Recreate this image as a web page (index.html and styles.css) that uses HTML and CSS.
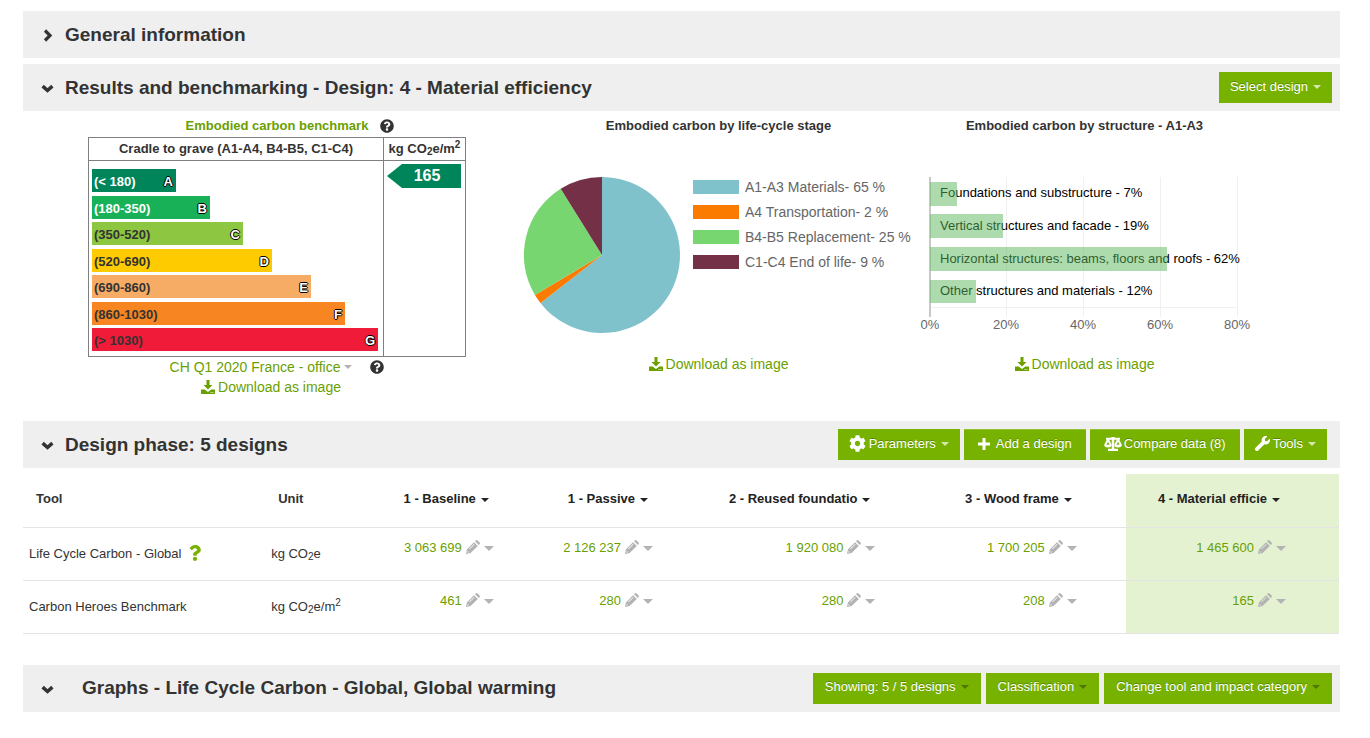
FILE: index.html
```html
<!DOCTYPE html>
<html lang="en">
<head>
<meta charset="utf-8">
<meta name="viewport" content="width=device-width, initial-scale=1">
<title>Material efficiency</title>
<link rel="stylesheet" href="styles.css">
</head>
<body>
<svg class="sprite" aria-hidden="true">
  <symbol id="help" viewBox="0 0 512 512"><path d="M504 256c0 136.997-111.043 248-248 248S8 392.997 8 256C8 119.083 119.043 8 256 8s248 111.083 248 248zM262.655 90c-54.497 0-89.255 22.957-116.549 63.758-3.536 5.286-2.353 12.415 2.715 16.258l34.699 26.31c5.205 3.947 12.621 3.008 16.665-2.122 17.864-22.658 30.113-35.797 57.303-35.797 20.429 0 45.698 13.148 45.698 32.958 0 14.976-12.363 22.667-32.534 33.976C247.128 238.528 216 254.941 216 296v4c0 6.627 5.373 12 12 12h56c6.627 0 12-5.373 12-12v-1.333c0-28.462 83.186-29.647 83.186-106.667 0-58.002-60.165-102-116.531-102zM256 338c-25.365 0-46 20.635-46 46 0 25.364 20.635 46 46 46s46-20.636 46-46c0-25.365-20.635-46-46-46z"/></symbol>
  <symbol id="question" viewBox="0 0 384 512"><path d="M202.021 0C122.202 0 70.503 32.703 29.914 91.026c-7.363 10.58-5.093 25.086 5.178 32.874l43.138 32.709c10.373 7.865 25.132 6.026 33.253-4.148 25.049-31.381 43.63-49.449 82.757-49.449 30.764 0 68.816 19.799 68.816 49.631 0 22.552-18.617 34.134-48.993 51.164-35.423 19.86-82.299 44.576-82.299 106.405V320c0 13.255 10.745 24 24 24h72.471c13.255 0 24-10.745 24-24v-5.773c0-42.86 125.268-44.645 125.268-160.627C377.504 66.256 286.902 0 202.021 0zM192 373.459c-38.196 0-69.271 31.075-69.271 69.271 0 38.195 31.075 69.27 69.271 69.27s69.271-31.075 69.271-69.271-31.075-69.27-69.271-69.27z"/></symbol>
  <symbol id="wrench" viewBox="0 0 512 512"><path d="M507.73 109.1c-2.24-9.03-13.54-12.09-20.12-5.51l-74.36 74.36-67.88-11.31-11.31-67.88 74.36-74.36c6.62-6.62 3.43-17.9-5.66-20.16-47.38-11.74-99.55.91-136.58 37.93-39.64 39.64-50.55 97.1-34.05 147.2L18.74 402.76c-24.99 24.99-24.99 65.51 0 90.5 24.99 24.99 65.51 24.99 90.5 0l213.21-213.21c50.12 16.71 107.47 5.68 147.37-34.22 37.07-37.07 49.7-89.32 37.91-136.73z"/></symbol>
  <symbol id="cog" viewBox="0 0 512 512"><path d="M487.4 315.7l-42.6-24.6c4.3-23.2 4.3-47 0-70.2l42.6-24.6c4.9-2.8 7.1-8.6 5.5-14-11.1-35.6-30-67.8-54.7-94.6-3.8-4.1-10-5.1-14.8-2.3L380.8 110c-17.9-15.4-38.5-27.3-60.8-35.1V25.8c0-5.6-3.9-10.5-9.4-11.7-36.7-8.2-74.3-7.8-109.2 0-5.5 1.2-9.4 6.1-9.4 11.7V75c-22.2 7.9-42.8 19.8-60.8 35.1L88.7 85.5c-4.9-2.8-11-1.9-14.8 2.3-24.7 26.7-43.6 58.9-54.7 94.6-1.7 5.4.6 11.2 5.5 14L67.3 221c-4.3 23.2-4.3 47 0 70.2l-42.6 24.6c-4.9 2.8-7.1 8.6-5.5 14 11.1 35.6 30 67.8 54.7 94.6 3.8 4.1 10 5.1 14.8 2.3l42.6-24.6c17.9 15.4 38.5 27.3 60.8 35.1v49.2c0 5.6 3.9 10.5 9.4 11.7 36.7 8.2 74.3 7.8 109.2 0 5.5-1.2 9.4-6.1 9.4-11.7v-49.2c22.2-7.9 42.8-19.8 60.8-35.1l42.6 24.6c4.9 2.8 11 1.9 14.8-2.3 24.7-26.7 43.6-58.9 54.7-94.6 1.5-5.5-.7-11.3-5.6-14.1zM256 336c-44.1 0-80-35.9-80-80s35.9-80 80-80 80 35.9 80 80-35.900 80-80 80z"/></symbol>
  <symbol id="download" viewBox="0 0 14 14"><path d="M5.500 0h3v5h3L7 9.500 2.500 5h3zM.5 9.500h3.200L7 12l3.300-2.500h3.200q.5 0 .5.500v3.500q0 .5-.5.500H.5q-.5 0-.5-.5V10q0-.5.5-.5zM9.600 12v.9h.9V12zm1.900 0v.9h.9V12z"/></symbol>
  <symbol id="plus" viewBox="0 0 12 12"><path d="M4.500 0h3v4.500H12v3H7.500V12h-3V7.500H0v-3h4.500z"/></symbol>
  <symbol id="scale" viewBox="0 0 18 14"><path d="M2 .8h5.200a1.900 1.900 0 0 1 3.600 0H16v2h-5.700v8.900H14V14H4v-2.300h3.700V2.800H2z"/><path fill-rule="evenodd" d="M3.100 2h1.800l2.700 5.800q0 2.700-3.700 2.700T.2 7.800zM4 4.700 2.500 7.800h3zM13.100 2h1.800l2.900 5.800q0 2.700-3.800 2.700t-3.700-2.700zM14 4.700l-1.500 3.100h3z"/></symbol>
  <symbol id="pencil" viewBox="0 0 14 14"><path fill-rule="evenodd" d="M8 2.200 11.800 6l-7.200 7.100L0 14l.9-4.600zM8 4 3.200 8.800l.5.500 4.800-4.800zM1.800 11l-.4 1.600L3 12.200z"/><path d="M9 1.200l1-.9q.8-.6 1.500.1l2.100 2.100q.7.700.1 1.500l-.9 1z"/></symbol>
  <symbol id="down" viewBox="0 0 12 8"><path d="M1.500 1.800 6 5.800l4.500-4" fill="none" stroke="currentColor" stroke-width="3.200"/></symbol>
  <symbol id="right" viewBox="0 0 9 13"><path d="M2 1.500 7 6.500l-5 5" fill="none" stroke="currentColor" stroke-width="3.200"/></symbol>
</svg>
<main class="page">
  <section class="bar">
    <h2 class="bar-title"><svg class="chev chev-right"><use href="#right"/></svg>General information</h2>
  </section>

  <section>
    <div class="bar">
      <h2 class="bar-title"><svg class="chev"><use href="#down"/></svg>Results and benchmarking - Design: 4 - Material efficiency</h2>
      <div class="actions"><button class="btn" type="button">Select design<i class="caret"></i></button></div>
    </div>
    <div class="results">
      <div class="panel panel-benchmark">
        <h3 class="panel-title green">Embodied carbon benchmark<svg class="help"><use href="#help"/></svg></h3>
        <table class="rating">
          <thead><tr><th>Cradle to grave (A1-A4, B4-B5, C1-C4)</th><th class="rating-unit">kg CO<sub>2</sub>e/m<sup>2</sup></th></tr></thead>
          <tbody><tr>
            <td><div class="grades">
              <div class="grade grade-a"><span>(&lt; 180)</span><b>A</b></div>
              <div class="grade grade-b"><span>(180-350)</span><b>B</b></div>
              <div class="grade grade-c"><span>(350-520)</span><b>C</b></div>
              <div class="grade grade-d"><span>(520-690)</span><b>D</b></div>
              <div class="grade grade-e"><span>(690-860)</span><b>E</b></div>
              <div class="grade grade-f"><span>(860-1030)</span><b>F</b></div>
              <div class="grade grade-g"><span>(&gt; 1030)</span><b>G</b></div>
            </div></td>
            <td class="score-cell"><div class="score">165</div></td>
          </tr></tbody>
        </table>
        <div class="line line-source"><a href="#">CH Q1 2020 France - office<i class="caret grey"></i></a><svg class="help"><use href="#help"/></svg></div>
        <div class="line line-benchmark"><a href="#"><svg class="dl"><use href="#download"/></svg>Download as image</a></div>
      </div>

      <div class="panel">
        <h3 class="panel-title">Embodied carbon by life-cycle stage</h3>
        <div class="pie-row">
          <svg class="pie" viewBox="0 0 156 156" role="img" aria-label="Embodied carbon by life-cycle stage">
            <path fill="#7fc2cc" d="M78 78V0A78 78 0 1 1 16.500 126z"/>
            <path fill="#fb7a00" d="M78 78 16.500 126A78 78 0 0 1 10.900 118z"/>
            <path fill="#78d670" d="M78 78 10.900 118A78 78 0 0 1 36.700 11.800z"/>
            <path fill="#733046" d="M78 78 36.700 11.800A78 78 0 0 1 78 0z"/>
          </svg>
          <ul class="legend">
            <li><i class="swatch blue"></i>A1-A3 Materials- 65 %</li>
            <li><i class="swatch orange"></i>A4 Transportation- 2 %</li>
            <li><i class="swatch lime"></i>B4-B5 Replacement- 25 %</li>
            <li><i class="swatch wine"></i>C1-C4 End of life- 9 %</li>
          </ul>
        </div>
        <div class="line"><a href="#"><svg class="dl"><use href="#download"/></svg>Download as image</a></div>
      </div>

      <div class="panel">
        <h3 class="panel-title">Embodied carbon by structure - A1-A3</h3>
        <svg class="bars" viewBox="0 0 330 156" role="img" aria-label="Embodied carbon by structure">
          <g fill="#f0f0f0">
            <path d="M86 0h1v140h-1zM163 0h1v140h-1zM240 0h1v140h-1zM317 0h1v140h-1zM10 130h307v1H10z"/>
          </g>
          <path fill="#c8c8c8" d="M9 0h2v140H9z"/>
          <g fill="#000">
            <text x="20" y="20">Foundations and substructure - 7%</text>
            <text x="20" y="53">Vertical structures and facade - 19%</text>
            <text x="20" y="86">Horizontal structures: beams, floors and roofs - 62%</text>
            <text x="20" y="118">Other structures and materials - 12%</text>
          </g>
          <g fill="#5cb85c" fill-opacity="0.500">
            <path d="M10 5h27v24H10zM10 37h73v24H10zM10 70h237v24H10zM10 103h46v23H10z"/>
          </g>
          <g fill="#666" text-anchor="middle">
            <text x="10" y="152">0%</text><text x="86" y="152">20%</text><text x="163" y="152">40%</text><text x="240" y="152">60%</text><text x="317" y="152">80%</text>
          </g>
        </svg>
        <div class="line"><a href="#"><svg class="dl"><use href="#download"/></svg>Download as image</a></div>
      </div>
    </div>
  </section>

  <section class="phase">
    <div class="bar">
      <h2 class="bar-title"><svg class="chev"><use href="#down"/></svg>Design phase: 5 designs</h2>
      <div class="actions actions-phase">
        <button class="btn" type="button"><svg class="ico"><use href="#cog"/></svg>Parameters<i class="caret"></i></button>
        <button class="btn btn-plain" type="button"><svg class="ico-plus"><use href="#plus"/></svg>Add a design</button>
        <button class="btn btn-plain" type="button"><svg class="ico-scale"><use href="#scale"/></svg>Compare data (8)</button>
        <button class="btn" type="button"><svg class="ico-wrench"><use href="#wrench"/></svg>Tools<i class="caret"></i></button>
      </div>
    </div>
    <table class="designs">
      <colgroup><col class="c-tool"><col class="c-unit"><col class="c-one"><col class="c-two"><col class="c-three"><col class="c-four"><col class="c-five"></colgroup>
      <thead><tr>
        <th class="name">Tool</th><th class="name">Unit</th>
        <th>1 - Baseline<i class="caret dark"></i></th><th>1 - Passive<i class="caret dark"></i></th><th>2 - Reused foundatio<i class="caret dark"></i></th><th>3 - Wood frame<i class="caret dark"></i></th><th class="current">4 - Material efficie<i class="caret dark"></i></th>
      </tr></thead>
      <tbody>
      <tr>
        <td class="name">Life Cycle Carbon - Global<svg class="question"><use href="#question"/></svg></td><td class="name">kg CO<sub>2</sub>e</td>
        <td><a href="#">3 063 699</a><svg class="pencil"><use href="#pencil"/></svg><i class="caret grey"></i></td>
        <td><a href="#">2 126 237</a><svg class="pencil"><use href="#pencil"/></svg><i class="caret grey"></i></td>
        <td><a href="#">1 920 080</a><svg class="pencil"><use href="#pencil"/></svg><i class="caret grey"></i></td>
        <td><a href="#">1 700 205</a><svg class="pencil"><use href="#pencil"/></svg><i class="caret grey"></i></td>
        <td class="current"><a href="#">1 465 600</a><svg class="pencil"><use href="#pencil"/></svg><i class="caret grey"></i></td>
      </tr>
      <tr>
        <td class="name">Carbon Heroes Benchmark</td><td class="name">kg CO<sub>2</sub>e/m<sup>2</sup></td>
        <td><a href="#">461</a><svg class="pencil"><use href="#pencil"/></svg><i class="caret grey"></i></td>
        <td><a href="#">280</a><svg class="pencil"><use href="#pencil"/></svg><i class="caret grey"></i></td>
        <td><a href="#">280</a><svg class="pencil"><use href="#pencil"/></svg><i class="caret grey"></i></td>
        <td><a href="#">208</a><svg class="pencil"><use href="#pencil"/></svg><i class="caret grey"></i></td>
        <td class="current"><a href="#">165</a><svg class="pencil"><use href="#pencil"/></svg><i class="caret grey"></i></td>
      </tr>
      </tbody>
    </table>
  </section>

  <section class="bar graphs">
    <h2 class="bar-title title-wide"><svg class="chev"><use href="#down"/></svg>Graphs - Life Cycle Carbon - Global, Global warming</h2>
    <div class="actions actions-graphs">
      <button class="btn" type="button">Showing: 5 / 5 designs<i class="caret shade"></i></button>
      <button class="btn" type="button">Classification<i class="caret shade"></i></button>
      <button class="btn" type="button">Change tool and impact category<i class="caret shade"></i></button>
    </div>
  </section>
</main>
</body>
</html>
```
FILE: styles.css
```css
* { box-sizing: border-box; }
body { margin: 0; background: #fff; color: #333; font: 14px/20px "Liberation Sans", Arial, sans-serif; }
h2, h3, ul { margin: 0; padding: 0; }
a { color: #6a9f00; text-decoration: none; }
svg { fill: currentColor; flex: none; }
sub, sup { font-size: 10px; line-height: 0; }
sub { vertical-align: -2px; }
.sprite { position: absolute; width: 0; height: 0; }
.page { padding: 11px 30px 24px 23px; }

.bar { display: flex; align-items: center; justify-content: space-between; min-height: 47px; padding: 8px 8px 8px 18px; margin-bottom: 6px; background: #efefef; }
.bar-title { display: flex; align-items: center; gap: 11px; font-size: 19px; line-height: 24px; }
.title-wide { gap: 28px; }
.chev { width: 13px; height: 9px; margin-top: 2px; }
.chev-right { height: 13px; }
.actions { display: flex; gap: 5px; }
.actions-phase { margin-right: 5px; gap: 4px; }
.btn { display: flex; align-items: center; height: 31px; padding: 0 11px 2px; border: 0; background: #77b200; color: #fff; font: 13px/20px "Liberation Sans", Arial, sans-serif; text-shadow: 0 -1px 0 rgba(0, 0, 0, 0.25); white-space: nowrap; }
.caret { display: inline-block; width: 0; height: 0; margin-left: 5px; border: 4px solid transparent; border-top-color: #d5e8ae; border-bottom: 0; vertical-align: middle; }
.caret.grey { border-width: 5px; border-bottom: 0; border-top-color: #b3b3b3; margin-left: 4px; }
.caret.dark { border-top-color: #222; }
.caret.shade { border-top-color: #507800; }
.ico { width: 17px; height: 17px; margin-right: 3px; }
.ico-plus { width: 12px; height: 12px; margin-right: 6px; }
.ico-scale { width: 18px; height: 14px; margin-right: 2px; }
.ico-wrench { width: 15px; height: 15px; margin-right: 3px; }
.btn-plain { padding: 0 14px 2px; box-shadow: inset 0 1px 0 rgba(255, 255, 255, 0.2); }
.actions-graphs .btn { padding: 0 12px 2px; }

.results { display: grid; grid-template-columns: 501fr 389fr 343fr 84fr; min-height: 305px; margin-top: -1px; }
.panel { display: flex; flex-direction: column; align-items: center; }
.panel-benchmark { padding-left: 7px; }
.panel-title { display: flex; align-items: center; gap: 12px; font-size: 13px; line-height: 20px; }
.green { color: #6a9f00; }
.help { width: 14px; height: 14px; color: #333; }
.green .help { margin-right: -26px; }
.line { display: flex; align-items: center; line-height: 20px; }
.line a { display: flex; align-items: center; }
.line .grey { border-width: 4px; border-bottom: 0; }
.line-source { gap: 18px; }
.line-benchmark { padding-right: 12px; }
.dl { width: 14px; height: 14px; margin-right: 3px; }

.rating { width: 378px; margin-top: 1px; border-collapse: collapse; font-weight: bold; font-size: 13px; color: #333; }
.rating th, .rating td { border: 1px solid #808080; padding: 0; }
.rating th { height: 23px; line-height: 20px; white-space: nowrap; }
.rating-unit { width: 82px; }
.grades { display: flex; flex-direction: column; justify-content: space-between; height: 182px; margin: 8px 4px 5px 3px; }
.grade { display: flex; justify-content: space-between; height: 23px; padding: 3px 3px 0 2px; }
.grade b { color: #fff; text-shadow: 1px 0 #000, -1px 0 #000, 0 1px #000, 0 -1px #000; }
.grade-a { width: 84px; background: #00845a; color: #fff; }
.grade-b { width: 118px; background: #19b158; color: #fff; }
.grade-c { width: 151px; background: #8dc640; }
.grade-d { width: 180px; background: #fecb00; }
.grade-e { width: 219px; background: #f6ac64; }
.grade-f { width: 253px; background: #f78522; }
.grade-g { width: 286px; background: #f01b38; }
.rating .score-cell { vertical-align: top; padding: 3px 4px 3px 3px; }
.score { height: 24px; padding-left: 6px; background: #00845a; color: #fff; clip-path: polygon(0 50%, 15px 0, 100% 0, 100% 100%, 15px 100%); font-size: 16px; line-height: 23px; text-align: center; }

.pie-row { display: flex; gap: 13px; align-self: flex-start; margin: 41px 0 21px; }
.pie { width: 156px; height: 156px; overflow: visible; }
.legend { display: flex; flex-direction: column; gap: 11px; margin-top: 3px; list-style: none; color: #666; }
.legend li { display: flex; align-items: center; height: 14px; gap: 6px; white-space: nowrap; }
.swatch { width: 46px; height: 14px; }
.blue { background: #7fc2cc; }
.orange { background: #fb7a00; }
.lime { background: #78d670; }
.wine { background: #733046; }
.bars { width: 330px; height: 156px; margin: 41px 0 21px; font-size: 13px; overflow: visible; }

.designs { width: 100%; table-layout: fixed; border-collapse: collapse; font-size: 13px; }
.phase .designs { width: calc(100% - 1px); }
.c-tool { width: 18.400%; }
.c-unit { width: 9%; }
.c-one { width: 12.100%; }
.c-two { width: 12.100%; }
.c-three { width: 16.900%; }
.c-four { width: 15.300%; }
.c-five { width: 16.200%; }
.designs th, .designs td { height: 53px; padding: 0 49px 0 0; border-bottom: 1px solid #e4e4e4; text-align: right; white-space: nowrap; }
.designs th { padding: 0 54px 2px 0; color: #222; }
.designs td { padding-bottom: 11px; }
.designs .name { padding: 0 0 0 6px; text-align: left; }
.designs th.name { padding: 0 0 2px 13px; color: #333; }
.designs .current { padding-right: 53px; background: #e4f2d2; }
.designs th.current { padding-right: 59px; }
.pencil { width: 14px; height: 14px; margin-left: 4px; color: #b3b3b3; vertical-align: -2px; }
.question { width: 12px; height: 16px; margin-left: 8px; color: #77b200; vertical-align: -3px; }
.graphs { margin-top: 31px; margin-bottom: 0; }
```
